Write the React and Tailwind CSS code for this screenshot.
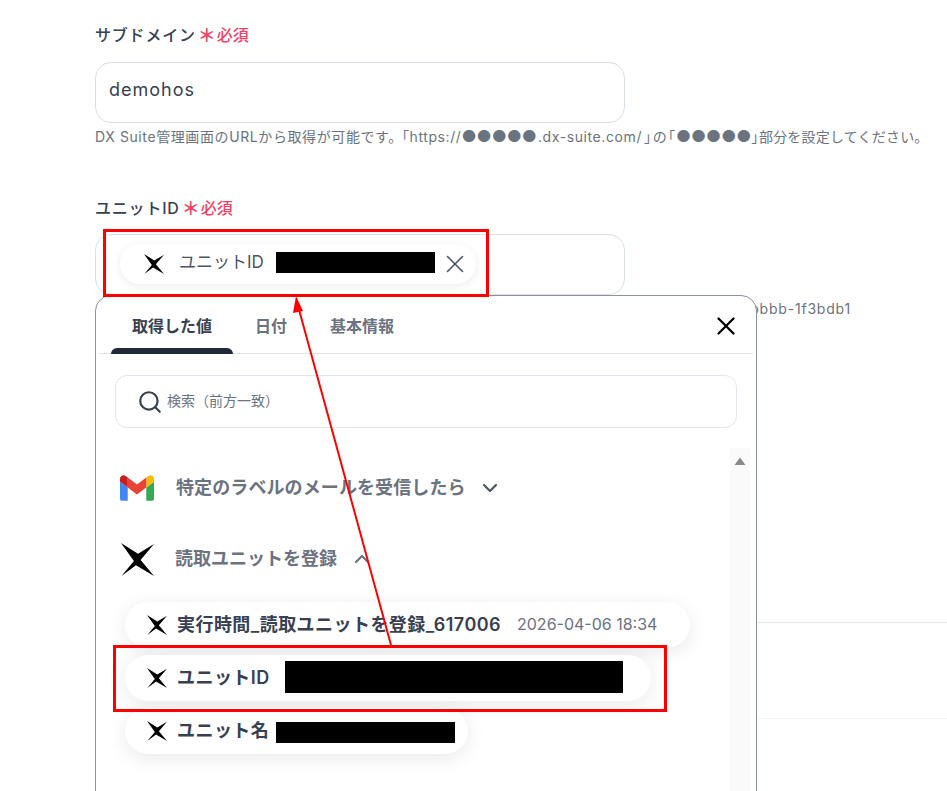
import React from "react";
import { X, Search, ChevronDown, ChevronUp } from "lucide-react";

const font = { fontFamily: '"Inter","Noto Sans CJK JP","Noto Sans",sans-serif' };

function Logo({ className }) {
  return (
    <svg viewBox="0 0 32 32" className={className}>
      <path d="M0 0 L16.5 10.5 L32 1 L19 16.5 L32 32 L14.5 21.5 L0.5 32 L12.5 17.5 Z" fill="#000" />
    </svg>
  );
}

function Gmail() {
  return (
    <svg viewBox="52 42 88 66" className="w-[34px] h-[26px]">
      <path fill="#4285f4" d="M58 108h14V74L52 59v43c0 3.32 2.69 6 6 6" />
      <path fill="#34a853" d="M120 108h14c3.32 0 6-2.69 6-6V59l-20 15" />
      <path fill="#fbbc04" d="M120 48v26l20-15v-8c0-7.42-8.47-11.65-14.4-7.2" />
      <path fill="#ea4335" d="M72 74V48l24 18 24-18v26L96 92" />
      <path fill="#c5221f" d="M52 51v8l20 15V48l-5.6-4.2c-5.94-4.45-14.4-.22-14.4 7.2" />
    </svg>
  );
}

function Label({ children }) {
  return (
    <div className="flex items-center h-6 text-[16px] font-medium text-[#374151] tracking-[0.8px]">
      <span>{children}</span>
      <span className="ml-[2px] text-[#f43f66] text-[18px] font-bold tracking-normal">＊</span>
      <span className="ml-[1px] text-[#f43f66] text-[16px] font-medium tracking-normal">必須</span>
    </div>
  );
}

function Dots() {
  return <span className="text-[16.5px] leading-none tracking-normal">●●●●●</span>;
}

function MenuChip({ children, className }) {
  return (
    <div className={`flex items-center h-[46px] rounded-full bg-white shadow-[0_4px_20px_rgba(0,0,0,0.09)] pl-[22px] ${className}`}>
      <Logo className="w-5 h-5 shrink-0" />
      <div className="ml-[10px] pb-[2px] flex items-center text-[18px] font-semibold text-[#374151] tracking-[0.45px] whitespace-nowrap">{children}</div>
    </div>
  );
}

export default function App() {
  return (
    <div style={font} className="relative w-[947px] h-[791px] overflow-hidden bg-white pt-[23px]">
      {/* Underlying form */}
      <div className="pl-[95px]">
        <Label>サブドメイン</Label>
        <div className="mt-[15px] w-[530px] h-[61px] rounded-2xl border border-[#d9dfe8] flex items-center pl-[13px] pb-[6px] text-[18px] text-[#374151] tracking-[1px]">demohos</div>
        <p className="mt-[4px] h-5 text-[14px] leading-5 text-[#6b7280] whitespace-nowrap tracking-[0.6px]">
          DX Suite管理画面のURLから取得が可能です。
          <span className="-ml-[1px]">｢</span>
          <span>https://</span>
          <Dots />
          <span className="ml-[1px]">.dx-suite.com/</span>
          <span className="ml-[2px]">｣</span>
          <span className="ml-[1px]">の</span>
          <span className="ml-[1px]">｢</span>
          <Dots />
          <span>｣</span>
          <span className="tracking-[0.2px]">部分を設定してください。</span>
        </p>

        <div className="mt-[49px]">
          <Label>ユニットID</Label>
        </div>
        <div className="mt-[14px] w-[530px] h-[61px] rounded-2xl border border-[#d9dfe8] flex items-center pl-[24px] pb-[2px]">
          <div className="flex items-center w-[356px] h-10 rounded-full bg-white shadow-[0_2px_10px_rgba(0,0,0,0.08)] pl-[24px]">
            <Logo className="w-5 h-5 shrink-0" />
            <span className="ml-[15px] pb-[2px] text-[17px] text-[#4b5563] whitespace-nowrap">ユニットID</span>
            <span className="ml-[12px] w-[159px] h-[21px] mb-[3px] bg-black shrink-0" />
            <X className="ml-[5px] w-[30px] h-[30px] text-[#4b5563] shrink-0" strokeWidth={1.3} />
          </div>
        </div>
        <p className="mt-[4px] w-[756px] text-right text-[14px] leading-5 text-[#6b7280] whitespace-nowrap tracking-[0.8px]">bbbb-1f3bdb1</p>

        <div className="mt-[303px] h-px bg-[#e5e7eb]" />
        <div className="mt-[95px] h-px bg-[#f3f4f6]" />
      </div>

      {/* Popup panel */}
      <div className="absolute left-[95px] top-[295px] w-[662px] h-[520px] rounded-t-2xl border border-[#8b93a1] bg-white">
        <div className="relative mx-[3px] h-[58px] border-b border-[#dfe3ea] flex items-center pl-[12px] pt-[3px]">
          <div className="relative w-[122px] h-full flex items-center justify-center text-[16px] font-bold text-[#374151]">
            取得した値
            <span className="absolute left-0 right-0 -bottom-px h-[6px] rounded-t-md bg-[#1f2937]" />
          </div>
          <span className="ml-[22px] text-[16px] font-semibold text-[#6b7280]">日付</span>
          <span className="ml-[43px] text-[16px] font-semibold text-[#6b7280]">基本情報</span>
          <X className="absolute right-[12px] top-[15px] w-[30px] h-[30px] text-black" strokeWidth={1.8} />
        </div>

        <div className="mx-[19px] mt-[21px] h-[53px] w-[622px] rounded-xl border border-[#e2e6ec] flex items-center pl-[21px]">
          <Search className="w-[26px] h-[26px] text-[#374151]" strokeWidth={2} />
          <span className="ml-[4px] pb-[2px] text-[14px] text-[#6b7280]">検索（前方一致）</span>
        </div>

        <div className="relative mt-[20px] flex">
          <div className="w-[634px] pl-[24px]">
            <div className="flex items-center h-[26px] mt-[27px]">
              <Gmail />
              <span className="ml-[22px] pb-[2px] text-[18px] font-semibold text-[#6b7280] tracking-[0.1px]">特定のラベルのメールを受信したら</span>
              <ChevronDown className="ml-[12px] w-6 h-6 text-[#4b5563]" strokeWidth={2.2} />
            </div>
            <div className="flex items-center h-[34px] mt-[41px]">
              <Logo className="w-[33px] h-[33px] ml-[1px]" />
              <span className="ml-[21px] pb-[2px] text-[18px] font-semibold text-[#6b7280]">読取ユニットを登録</span>
              <ChevronUp className="ml-[13px] w-6 h-6 text-[#6b7280]" strokeWidth={2.2} />
            </div>
            <div className="mt-[26px] ml-[5px] flex flex-col gap-[7px] items-start">
              <MenuChip className="w-[565px]">
                実行時間_読取ユニットを登録_617006
                <span className="ml-[16px] text-[16px] font-normal text-[#6b7280] tracking-normal">2026-04-06 18:34</span>
              </MenuChip>
              <MenuChip className="w-[526px]">
                ユニットID
                <span className="ml-[15px] w-[338px] h-[32px] bg-black" />
              </MenuChip>
              <MenuChip className="w-[343px]">
                ユニット名
                <span className="ml-[7px] mt-[5px] w-[179px] h-[21px] bg-black" />
              </MenuChip>
            </div>
          </div>
          <div className="w-[20px] h-[400px] bg-[#fafafa] flex justify-center pt-[9px]">
            <svg viewBox="0 0 12 8" className="w-[12px] h-[8px]">
              <path d="M6 0.5 L11.5 8 H0.5 Z" fill="#8a8a8a" />
            </svg>
          </div>
        </div>
      </div>

      {/* Annotations */}
      <div className="absolute left-[103px] top-[229px] w-[386px] h-[68px] border-[3px] border-[#ff0000]" />
      <div className="absolute left-[113px] top-[645px] w-[554px] h-[67px] border-[3px] border-[#ff0000]" />
      <svg className="absolute left-0 top-0 w-[947px] h-[791px] pointer-events-none" viewBox="0 0 947 791">
        <line x1="391" y1="645" x2="298" y2="306" stroke="#ff0000" strokeWidth="2" />
        <path d="M296 296 L303 311 L293 313 Z" fill="#ff0000" />
      </svg>
    </div>
  );
}
